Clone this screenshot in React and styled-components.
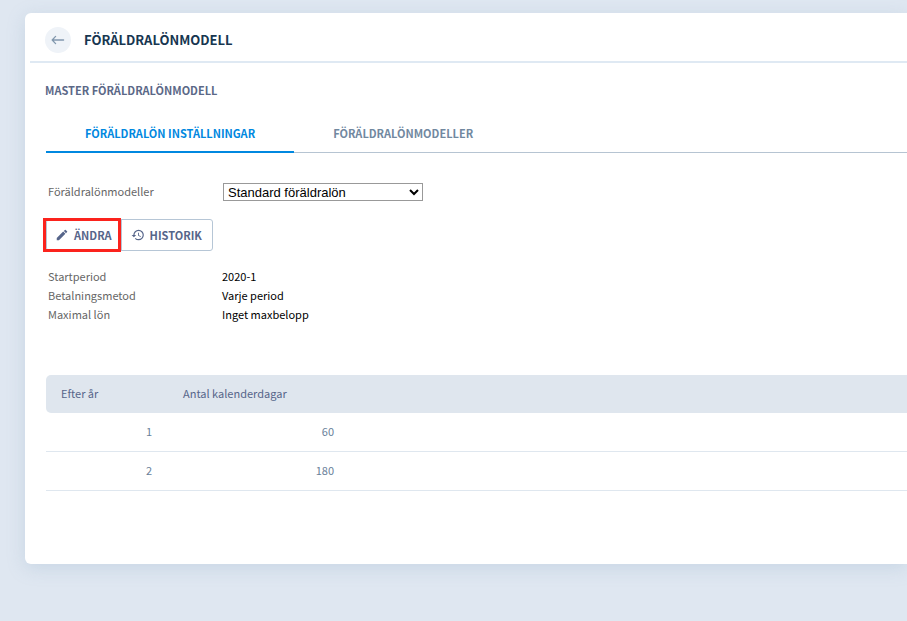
import { useState } from "react"
import styled, { createGlobalStyle } from "styled-components"
import { MdEdit, MdHistory } from "react-icons/md"

const details = [
    { label: "Startperiod", value: "2020-1" },
    { label: "Betalningsmetod", value: "Varje period" },
    { label: "Maximal lön", value: "Inget maxbelopp" },
]

const rows = [
    { year: 1, days: 60 },
    { year: 2, days: 180 },
]

const tabs = ["FÖRÄLDRALÖN INSTÄLLNINGAR", "FÖRÄLDRALÖNMODELLER"]

const App = () => {
    const [activeTab, setActiveTab] = useState(0)

    return (
        <>
            <GlobalStyle />
            <Card>
                <Header>
                    <BackButton type="button" aria-label="Tillbaka">
                        <ArrowIcon viewBox="0 0 14 10">
                            <path d="M12.6 5H1.5M4.6 1.4L1.2 5L4.6 8.6" />
                        </ArrowIcon>
                    </BackButton>
                    <Title>FÖRÄLDRALÖNMODELL</Title>
                </Header>
                <Content>
                    <SubTitle>MASTER FÖRÄLDRALÖNMODELL</SubTitle>
                    <Tabs role="tablist">
                        {tabs.map((tab, index) => (
                            <Tab
                                key={tab}
                                type="button"
                                role="tab"
                                aria-selected={index === activeTab}
                                $active={index === activeTab}
                                onClick={() => setActiveTab(index)}
                            >
                                {tab}
                            </Tab>
                        ))}
                    </Tabs>
                    <Field>
                        <Label htmlFor="model">Föräldralönmodeller</Label>
                        <Select id="model">
                            <option>Standard föräldralön</option>
                        </Select>
                    </Field>
                    <ButtonGroup>
                        <ActionButton type="button" $highlighted>
                            <MdEdit size={14} />
                            ÄNDRA
                        </ActionButton>
                        <ActionButton type="button">
                            <MdHistory size={14} />
                            HISTORIK
                        </ActionButton>
                    </ButtonGroup>
                    <Details>
                        {details.map((item) => (
                            <DetailRow key={item.label}>
                                <DetailLabel>{item.label}</DetailLabel>
                                <DetailValue>{item.value}</DetailValue>
                            </DetailRow>
                        ))}
                    </Details>
                    <Table>
                        <colgroup>
                            <Col $width={122} />
                            <Col $width={182} />
                            <Col />
                        </colgroup>
                        <thead>
                            <tr>
                                <Th scope="col">Efter år</Th>
                                <Th scope="col">Antal kalenderdagar</Th>
                                <Th as="td" />
                            </tr>
                        </thead>
                        <tbody>
                            {rows.map((row) => (
                                <tr key={row.year}>
                                    <Td>{row.year}</Td>
                                    <Td>{row.days}</Td>
                                    <Td />
                                </tr>
                            ))}
                        </tbody>
                    </Table>
                </Content>
            </Card>
        </>
    )
}

export default App

const GlobalStyle = createGlobalStyle`
    * {
        box-sizing: border-box;
    }

    body {
        margin: 0;
        background: #dfe7f1;
        font-family: "Source Sans Pro", "Noto Sans CJK SC", sans-serif;
        font-size: 11px;
        line-height: 19px;
    }

    button {
        font-family: inherit;
        cursor: pointer;
    }
`

const Card = styled.main`
    margin: 13px 0 57px 25px;
    padding-bottom: 73px;
    background: #fff;
    border-radius: 6px 0 0 6px;
    box-shadow: 0 4px 18px rgba(130, 165, 190, 0.25);
`

const Header = styled.header`
    display: flex;
    align-items: center;
    gap: 13px;
    height: 50px;
    margin-left: 5px;
    padding: 5px 15px 0;
    border-bottom: 2px solid #dfe9f3;
`

const BackButton = styled.button`
    display: flex;
    align-items: center;
    justify-content: center;
    width: 26px;
    height: 26px;
    padding: 0;
    border: 0;
    border-radius: 50%;
    background: #eff3f8;
`

const ArrowIcon = styled.svg`
    width: 14px;
    height: 10px;
    fill: none;
    stroke: #8298ae;
    stroke-width: 1.3;
    stroke-linecap: round;
    stroke-linejoin: round;
`

const Title = styled.h1`
    margin: 0;
    color: #173650;
    font-size: 13px;
    font-weight: 700;
    line-height: 18px;
`

const Content = styled.div`
    padding: 18px 0 0 20px;
`

const SubTitle = styled.h2`
    margin: 0;
    color: #5b6887;
    font-size: 11px;
    font-weight: 700;
`

const Tabs = styled.div`
    display: flex;
    height: 53px;
    margin-left: 1px;
    box-shadow: inset 0 -1px 0 #b6c4d2;
`

const Tab = styled.button`
    padding: 14px 39px 0;
    border: 0;
    border-bottom: 2px solid ${({ $active }) => ($active ? "#0088e0" : "transparent")};
    background: none;
    color: ${({ $active }) => ($active ? "#0088e0" : "#71889f")};
    font-size: 11px;
    font-weight: 700;
`

const Field = styled.div`
    display: flex;
    align-items: flex-end;
    margin-top: 29px;
    padding-left: 3px;
`

const Label = styled.label`
    width: 175px;
    color: #666;
`

const Select = styled.select`
    width: 200px;
    height: 18px;
    padding: 0;
    border: 1px solid #999;
    border-radius: 0;
    background: #fff;
    color: #000;
    font-family: "Liberation Sans", Arial, sans-serif;
    font-size: 13px;
`

const ButtonGroup = styled.div`
    display: flex;
    width: fit-content;
    margin: 18px 0 0 1px;
    border: 1px solid #b6c6d6;
    border-radius: 3px;
`

const ActionButton = styled.button`
    position: relative;
    display: flex;
    align-items: center;
    gap: 5px;
    height: 30px;
    padding: 0 9px 0 8px;
    border: 0;
    background: none;
    color: #56658a;
    font-size: 11px;
    font-weight: 700;

    & + & {
        padding: 0 10px 0 9px;
        border-left: 1px solid #b6c6d6;
    }

    ${({ $highlighted }) => $highlighted && `
        &::after {
            content: "";
            position: absolute;
            inset: -2px 0 -2px -4px;
            border: 3px solid #fb231d;
        }
    `}
`

const Details = styled.dl`
    margin: 16px 0 0;
    padding-left: 3px;
`

const DetailRow = styled.div`
    display: flex;
`

const DetailLabel = styled.dt`
    width: 174px;
    color: #666;
`

const DetailValue = styled.dd`
    margin: 0;
    color: #000;
`

const Table = styled.table`
    width: calc(100% - 1px);
    margin: 51px 0 0 1px;
    border-collapse: separate;
    border-spacing: 0;
    table-layout: fixed;
`

const Col = styled.col`
    width: ${({ $width }) => ($width ? `${$width}px` : "auto")};
`

const Th = styled.th`
    height: 38px;
    padding: 0 15px 2px;
    background: #dfe6ee;
    color: #56658a;
    font-weight: 400;
    text-align: left;

    &:first-child {
        border-radius: 5px 0 0 5px;
    }
`

const Td = styled.td`
    height: 39px;
    padding: 0 16px 2px;
    border-bottom: 1px solid #dfe7ef;
    color: #6a7f9a;
    text-align: right;
`
